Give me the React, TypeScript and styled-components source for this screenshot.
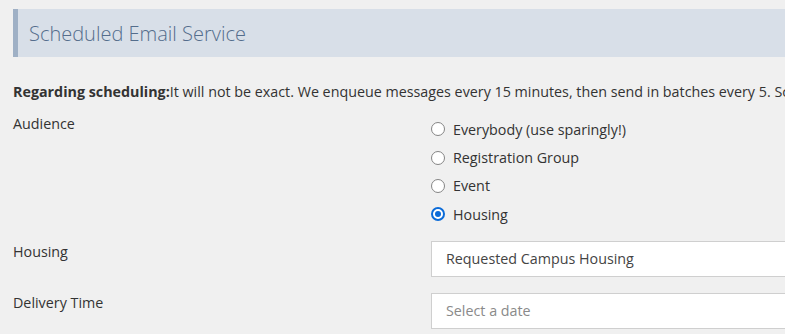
import React from 'react';
import styled, { createGlobalStyle } from 'styled-components';

const GlobalStyle = createGlobalStyle`
  html, body {
    margin: 0;
    padding: 0;
    background: #f0f0f0;
    overflow: hidden;
  }
  body {
    font-family: 'Open Sans', 'Liberation Sans', sans-serif;
    font-size: 14.3px;
    color: #333;
  }
`;

const Page = styled.div`
  width: 1000px;
  padding: 9px 13px;
`;

const Header = styled.div`
  height: 48px;
  display: flex;
  align-items: center;
  background: #d8dfe8;
  border-left: 5px solid #9fb0c5;
  padding-left: 11px;
`;

const Title = styled.h2`
  margin: 0;
  font-weight: 300;
  font-size: 20px;
  color: #546d8c;
`;

const Notice = styled.p`
  margin: 25px 0 0;
  line-height: 20px;
  white-space: nowrap;
`;

const Row = styled.div<{ $gap?: number }>`
  display: grid;
  grid-template-columns: 418px 1fr;
  margin-top: ${(p) => p.$gap ?? 0}px;
`;

const Label = styled.div<{ $pad?: number }>`
  line-height: 20px;
  padding-top: ${(p) => p.$pad ?? 0}px;
`;

const RadioList = styled.div`
  display: flex;
  flex-direction: column;
  padding-top: 1px;
`;

const RadioItem = styled.label`
  display: flex;
  align-items: center;
  height: 28.4px;
  gap: 8px;
  cursor: pointer;
`;

const RadioDot = styled.span<{ $checked?: boolean }>`
  width: 14px;
  height: 14px;
  box-sizing: border-box;
  border-radius: 50%;
  border: ${(p) => (p.$checked ? '2px solid #0b6bd8' : '1.5px solid #858585')};
  background: #fff;
  display: flex;
  align-items: center;
  justify-content: center;

  &::after {
    content: '';
    display: ${(p) => (p.$checked ? 'block' : 'none')};
    width: 6px;
    height: 6px;
    border-radius: 50%;
    background: #0b6bd8;
  }
`;

const Field = styled.div<{ $placeholder?: boolean }>`
  height: 36px;
  box-sizing: border-box;
  border: 1px solid #cfcfcf;
  background: #fff;
  display: flex;
  align-items: center;
  padding-left: 14px;
  color: ${(p) => (p.$placeholder ? '#8a8a8a' : '#444')};
`;

const audience = ['Everybody (use sparingly!)', 'Registration Group', 'Event', 'Housing'];

export default function App() {
  return (
    <Page>
      <GlobalStyle />
      <Header>
        <Title>Scheduled Email Service</Title>
      </Header>
      <Notice>
        <b>Regarding scheduling:</b>It will not be exact. We enqueue messages every 15 minutes, then send in batches every 5. Scheduled messages may take up to 20 minutes to go out.
      </Notice>
      <Row $gap={12}>
        <Label>Audience</Label>
        <RadioList>
          {audience.map((a) => (
            <RadioItem key={a}>
              <RadioDot $checked={a === 'Housing'} />
              {a}
            </RadioItem>
          ))}
        </RadioList>
      </Row>
      <Row $gap={12}>
        <Label $pad={1}>Housing</Label>
        <Field>Requested Campus Housing</Field>
      </Row>
      <Row $gap={16}>
        <Label>Delivery Time</Label>
        <Field $placeholder>Select a date</Field>
      </Row>
    </Page>
  );
}
